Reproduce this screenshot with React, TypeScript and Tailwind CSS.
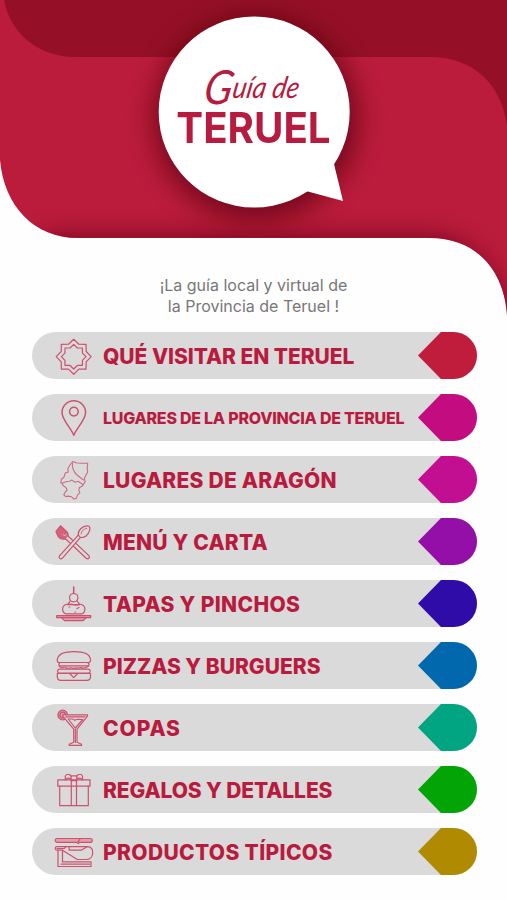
import React from 'react';

const starPoints = (radius: number) =>
  Array.from({ length: 16 }, (_, i) => {
    const r = i % 2 === 0 ? radius : radius * 0.77;
    const a = (i * Math.PI) / 8;
    return `${(20.7 + r * Math.cos(a)).toFixed(2)},${(20.7 + r * Math.sin(a)).toFixed(2)}`;
  }).join(' ');

const icons: Record<string, React.ReactNode> = {
  star: (
    <>
      <polygon points={starPoints(17.5)} />
      <polygon points={starPoints(12.3)} />
    </>
  ),
  pin: (
    <g strokeWidth="1.5">
      <path d="M20.8 37.2C18 30 9 22 9 14.5a11.8 11.8 0 0 1 23.6 0C32.6 22 23.6 30 20.8 37.2Z" />
      <circle cx="20.9" cy="13.6" r="4.3" />
    </g>
  ),
  aragon: (
    <g strokeWidth="1.1" stroke="#d06a80">
      <path d="M19.7 1.5L24 3l4 .2 6.700 0 -.5 5 .5 4-2 3.200-1.400 3 .8 3.500-2.700 4-3 1.500-.5 3 1 2.500-2.300 2-1.300 3.500-2.500.6-2.500-2.300-3-.6-2.500.5-2-1.800 1.500-2.700 1.800-2-1.200-2.500-2.500-1.800-1.300-2.300-1.300-.7.500-3.500 2.500-1.800 1.500-4.500 3-1-.5-3.500 1.800-3Z" />
      <path d="M19.500 3c-.8 5 1.500 9 4.500 12l6.500 5M9.500 23l4-1.500 3-.2 2.500-1.200 3 2.200 3-1 4.500 3" />
    </g>
  ),
  cutlery: (
    <>
      <path fill="#d4637a" d="M7.500 3.800l7 6.700c1.400 3 .4 6-2.500 6.600-2.300.5-5.200-.8-6.700-2.300L3 9.400Z" />
      <path stroke="#dadada" strokeWidth="0.8" d="M10 12.500c1.500 1.500 2.500 1.500 3.500 0" />
      <path fill="#dadada" d="M12.500 16.700l20.700 19.600c2 1.500 4.200-.7 2.700-2.700L15 14" />
      <path d="M27.500 15.400L9.200 36.300c-1.800 1.500-4-.5-2.700-2.500L25.300 13.200" fill="#dadada" />
      <path d="M25.300 13.200c-.7-4.500 4-9.500 9-9.400 2.700 0 3 2.300 2.200 4.900-1.200 4.500-5 7.300-9 6.700Z" fill="#dadada" />
      <path d="M28 12c.3-3.200 3-5.500 5.800-5.700" strokeWidth="0.800" />
    </>
  ),
  tapas: (
    <>
      <path d="M20.7 3v6.500" strokeWidth="1.5" />
      <circle cx="20.7" cy="13.7" r="4.200" />
      <path d="M17.500 16.500l-2.800 4.200h12l-2.800-4.200" />
      <path d="M13 20.500c-4.500 1.500-4.500 8 0 9.300h15.500c4.500-1.300 4.500-7.800 0-9.300-2-1-3.500.8-6 .5-3.300-.8-6-1.500-9.500-.5Z" />
      <path d="M16 23h.8M24 24.500l2-1M22 28h.8" />
      <path d="M3.700 31.600h34v2h-4.500l-3 3H11.500l-3-3H3.700Z" fill="#e0a0ad" />
      <path d="M8.500 33.600h25" />
    </>
  ),
  burger: (
    <>
      <path d="M4.300 13.500C5 8.500 11 5.600 21 5.600s16 2.900 16.500 7.900c.2 2.200-.6 3-2.400 3H6.500c-1.800 0-2.500-.8-2.200-3Z" />
      <path d="M7 16.700c-1.500 1-1.500 2.600 0 3.100h27.700c1.800-.5 1.800-2.100 0-3.100" />
      <path d="M6 20c2 3 4 1 5.500 1s2 2 5 1 3 .8 5.500.2 3 .2 4.700-.4 3.700 1 5.500 0 2-.8 3.500-1.800" />
      <path d="M6.500 23.200h28.800c2.600.2 2.600 3.700 0 3.900H6.500c-2.600-.2-2.600-3.700 0-3.900Z" />
      <path d="M4.300 27.500h33.200v3c0 2.600-1.200 3.900-3.800 3.900H8c-2.600 0-3.700-1.300-3.700-3.900Z" />
      <path d="M16.700 27.500l4 4.200 4-4.200" />
    </>
  ),
  cocktail: (
    <>
      <circle cx="9.700" cy="7" r="4.800" fill="#d4637a" fillOpacity="0.5" />
      <circle cx="9.700" cy="7" r="2.800" />
      <path d="M9.700 6.900h24.800v1.300L24 21.200v13l4.500 2v1.200H16.200v-1.200l4.500-2v-13L9.700 8.200Z" fill="#dadada" />
      <path d="M12.500 8.800h19.700M15.200 11h4.500l2 1.300 2.700-1 5.500.2-7.700 8.500Z" />
      <path d="M22.300 21v13.500" />
    </>
  ),
  gift: (
    <>
      <rect x="4.800" y="9.800" width="32.200" height="6.400" />
      <path d="M6.700 16.200v19.500h28.600V16.200M18.300 9.800v25.900M23.500 9.800v25.900" />
      <rect x="18" y="5.800" width="5.800" height="4.800" />
      <path d="M18 6.200L16.500 4.500h-3L12.300 6v3.800M23.800 6.200l1.500-1.700h3L29.500 6v3.800M12.500 9.800c1.500-2 3.500-2 5.500-1M29.300 9.800c-1.500-2-3.500-2-5.500-1" />
    </>
  ),
  ham: (
    <>
      <path d="M4 6.500h33.500c2.500 0 2.500 3.800 0 3.800H26.300l-1 1.300-2-1.300H4C1.500 10 1.500 6.700 4 6.500Z" fill="#e0a0ad" />
      <path d="M25 9.800l2-3" />
      <path d="M4 14.700h30.500c4 0 5.500 3 5.200 6.300-.3 4-3 6.500-6.200 6.500h-9.200L9.500 18.200H4c-2.500-.3-2.500-3.200 0-3.500Z" />
      <path d="M4 16.500h7.200l1.500-1.700M16.200 14.800v3.400h12l5.500-3.300" />
      <path d="M5 18.200v16.300h33v-4.600H9.500V18.200" />
      <path d="M8 32.200h28.500" />
    </>
  ),
};

const items = [
  { icon: 'star', label: 'QUÉ VISITAR EN TERUEL', color: 'bg-[#c01d3d]', text: 'mt-[2px] text-[21px] tracking-[-0.05px]' },
  { icon: 'pin', label: 'LUGARES DE LA PROVINCIA DE TERUEL', color: 'bg-[#c20c80]', text: 'mt-px text-[16px] tracking-[-0.24px]' },
  { icon: 'aragon', label: 'LUGARES DE ARAGÓN', color: 'bg-[#c20f91]', text: 'mt-[2px] text-[21px] tracking-[0.25px]' },
  { icon: 'cutlery', label: 'MENÚ Y CARTA', color: 'bg-[#940fa7]', text: 'mt-[2px] text-[21px] tracking-[0.2px]' },
  { icon: 'tapas', label: 'TAPAS Y PINCHOS', color: 'bg-[#2f0ca7]', text: 'mt-[2px] text-[21px] tracking-[0.35px]' },
  { icon: 'burger', label: 'PIZZAS Y BURGUERS', color: 'bg-[#0268ad]', text: 'mt-[2px] text-[21px]' },
  { icon: 'cocktail', label: 'COPAS', color: 'bg-[#02a581]', text: 'mt-[2px] text-[21px] tracking-[0.9px]' },
  { icon: 'gift', label: 'REGALOS Y DETALLES', color: 'bg-[#02a505]', text: 'mt-[2px] text-[21px] tracking-[-0.1px]' },
  { icon: 'ham', label: 'PRODUCTOS TÍPICOS', color: 'bg-[#b08a00]', text: 'mt-[2px] text-[21px] tracking-[0.35px]' },
];

function HeaderArt() {
  return (
    <svg className="col-start-1 row-start-1" width="507" height="320" viewBox="0 0 507 320">
      <defs>
        <clipPath id="banner">
          <path d="M0 0H507V315C504 270 476 238 430 238H78C34 238 4 206 0 160Z" />
        </clipPath>
        <filter id="soft" filterUnits="userSpaceOnUse" x="-60" y="-60" width="640" height="480">
          <feGaussianBlur stdDeviation="13" />
        </filter>
      </defs>
      <g clipPath="url(#banner)">
        <rect width="507" height="320" fill="#bb1c3c" />
        <path d="M4 0C10 33 38 57 76 57H430C475 57 502 86 507 126V0Z" fill="#951027" />
        <path d="M40 237H425C470 237 496 272 514 325V380H40Z" fill="#6d071c" opacity="0.9" filter="url(#soft)" />
        <circle cx="256" cy="118" r="102" fill="#56000f" opacity="0.7" filter="url(#soft)" />
      </g>
      {/* Speech bubble */}
      <circle cx="254.200" cy="112" r="95.500" fill="#fff" />
      <path d="M334 164L343 201L306 191L290 165Z" fill="#fff" />
    </svg>
  );
}

export default function App() {
  return (
    <main className="w-[507px] h-[900px] overflow-hidden bg-[#fefefe] font-['Inter',sans-serif]">
      <header className="grid h-[275px] w-[507px]">
        <HeaderArt />
        <h1 className="relative col-start-1 row-start-1 flex flex-col items-center pt-[63px] text-[#b51c40]">
          <span className="flex h-[42px] origin-center -translate-y-[4px] scale-x-[0.88] -skew-x-12 items-baseline whitespace-nowrap font-['Lato',sans-serif] text-[30px] italic leading-[42px]">
            <span className="relative top-[6px] text-[47px]">G</span>uía&nbsp;de
          </span>
          <span className="h-[44px] scale-x-[0.935] text-[43px] font-bold leading-[44px]">TERUEL</span>
        </h1>
      </header>

      <p className="relative h-[57px] text-center text-[16px] leading-[21px] text-[#777]">
        ¡La guía local y virtual de
        <br />
        la Provincia de Teruel !
      </p>

      {/* Menu */}
      <nav className="ml-8 flex w-[445px] flex-col gap-[15px]">
        {items.map((item) => (
          <a key={item.icon} href="#" className="flex h-[47px] items-center rounded-full bg-[#dadada] pl-[21px]">
            <svg
              className="size-10 shrink-0 overflow-visible"
              viewBox="0 0 40 40"
              fill="none"
              stroke="#cc526d"
              strokeWidth="1.2"
              strokeLinejoin="round"
              strokeLinecap="round"
            >
              {icons[item.icon]}
            </svg>
            <span className={`ml-[10px] whitespace-nowrap font-extrabold leading-none text-[#b91b3e] ${item.text}`}>
              {item.label}
            </span>
            <span
              className={`ml-auto h-full w-[59px] shrink-0 rounded-r-full [clip-path:polygon(0_50%,23px_0,100%_0,100%_100%,23px_100%)] ${item.color}`}
            ></span>
          </a>
        ))}
      </nav>
    </main>
  );
}
